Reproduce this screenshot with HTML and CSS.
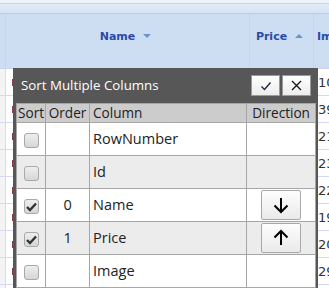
FILE: index.html
```html
<!DOCTYPE html>
<html lang="en">
<head>
    <meta charset="UTF-8">
    <title>Sort Multiple Columns</title>
    <link rel="stylesheet" href="styles.css">
</head>
<body>

    <div class="grid">
        <div class="grid-top"></div>
        <div class="grid-bar"></div>
        <div class="grid-head">
            <div class="gh gh-num"></div>
            <div class="gh gh-name">Name <span class="tri tri-down"></span></div>
            <div class="gh gh-price">Price <span class="tri tri-up"></span></div>
            <div class="gh gh-img">Image</div>
        </div>
        <div class="grid-body">
            <div class="grow"><div class="gc gc-num"></div><div class="gc gc-name"><span class="mark"></span></div><div class="gc gc-price"></div><div class="gc gc-img">10</div></div>
            <div class="grow"><div class="gc gc-num"></div><div class="gc gc-name"><span class="mark"></span></div><div class="gc gc-price"></div><div class="gc gc-img">39</div></div>
            <div class="grow"><div class="gc gc-num"></div><div class="gc gc-name"><span class="mark"></span></div><div class="gc gc-price"></div><div class="gc gc-img">21</div></div>
            <div class="grow"><div class="gc gc-num"></div><div class="gc gc-name"><span class="mark"></span></div><div class="gc gc-price"></div><div class="gc gc-img">23</div></div>
            <div class="grow"><div class="gc gc-num"></div><div class="gc gc-name"><span class="mark"></span></div><div class="gc gc-price"></div><div class="gc gc-img">22</div></div>
            <div class="grow"><div class="gc gc-num"></div><div class="gc gc-name"><span class="mark"></span></div><div class="gc gc-price"></div><div class="gc gc-img">19</div></div>
            <div class="grow"><div class="gc gc-num"></div><div class="gc gc-name"><span class="mark"></span></div><div class="gc gc-price"></div><div class="gc gc-img">20</div></div>
            <div class="grow"><div class="gc gc-num"></div><div class="gc gc-name"><span class="mark"></span></div><div class="gc gc-price"></div><div class="gc gc-img">29</div></div>
            <div class="grow"><div class="gc gc-num"></div><div class="gc gc-name"><span class="mark"></span></div><div class="gc gc-price"></div><div class="gc gc-img">28</div></div>
        </div>
    </div>

    <!-- Ventana de ordenar (encima del grid) -->
    <div class="dialog">
        <div class="dlg-title">
            <span>Sort Multiple Columns</span>
            <div class="dlg-buttons">
                <button class="dlg-btn">
                    <svg width="12" height="10" viewBox="0 0 12 10"><path d="M1.5 5.5 L4.5 8.5 L10.5 1.5" fill="none" stroke="#1b2a44" stroke-width="1.4"/></svg>
                </button>
                <button class="dlg-btn">
                    <svg width="11" height="11" viewBox="0 0 11 11"><path d="M1 1 L10 10 M10 1 L1 10" fill="none" stroke="#111" stroke-width="1.3"/></svg>
                </button>
            </div>
        </div>

        <table class="sort-table">
            <colgroup>
                <col class="c-sort"><col class="c-order"><col class="c-column"><col class="c-dir">
            </colgroup>
            <thead>
                <tr><th>Sort</th><th>Order</th><th class="left">Column</th><th>Direction</th></tr>
            </thead>
            <tbody>
                <tr>
                    <td class="center"><span class="check"></span></td>
                    <td></td>
                    <td>RowNumber</td>
                    <td></td>
                </tr>
                <tr class="alt">
                    <td class="center"><span class="check"></span></td>
                    <td></td>
                    <td>Id</td>
                    <td></td>
                </tr>
                <tr>
                    <td class="center"><span class="check"><svg width="11" height="10" viewBox="0 0 11 10"><path d="M1 5 L4 8 L10 1.5" fill="none" stroke="#333" stroke-width="2.4"/></svg></span></td>
                    <td class="center">0</td>
                    <td>Name</td>
                    <td class="center">
                        <button class="dir-btn">
                            <svg width="16" height="18" viewBox="0 0 16 18"><path d="M8 2 V16 M1.5 9.5 L8 16 L14.5 9.5" fill="none" stroke="#000" stroke-width="2"/></svg>
                        </button>
                    </td>
                </tr>
                <tr class="alt">
                    <td class="center"><span class="check"><svg width="11" height="10" viewBox="0 0 11 10"><path d="M1 5 L4 8 L10 1.5" fill="none" stroke="#333" stroke-width="2.4"/></svg></span></td>
                    <td class="center">1</td>
                    <td>Price</td>
                    <td class="center">
                        <button class="dir-btn">
                            <svg width="16" height="18" viewBox="0 0 16 18"><path d="M8 16 V2 M1.5 8.5 L8 2 L14.5 8.5" fill="none" stroke="#000" stroke-width="2"/></svg>
                        </button>
                    </td>
                </tr>
                <tr>
                    <td class="center"><span class="check"></span></td>
                    <td></td>
                    <td>Image</td>
                    <td></td>
                </tr>
            </tbody>
        </table>
    </div>

</body>
</html>
```

FILE: styles.css
```css
* {
    margin: 0;
    padding: 0;
    box-sizing: border-box;
}

body {
    width: 329px;
    height: 288px;
    overflow: hidden;
    position: relative;
    background: #fff;
    font-family: "Open Sans", "DejaVu Sans", sans-serif;
}

/* Grid de fondo */
.grid {
    width: 329px;
}

.grid-top {
    height: 4px;
    background: #eef2fb;
    border-bottom: 1px solid #cdd0f4;
}

.grid-bar {
    height: 10px;
    background: linear-gradient(#e3ecf9, #d5e3f5);
    border-bottom: 1px solid #b8cdeb;
}

.grid-head {
    display: flex;
    height: 55px;
    background: #cddef3;
    border-bottom: 1px solid #c6d2ee;
}

.gh {
    display: flex;
    align-items: center;
    justify-content: center;
    padding-bottom: 10px;
    border-right: 1px solid #ccd0f4;
    font-family: "DejaVu Sans", sans-serif;
    font-weight: bold;
    font-size: 11px;
    color: #2a4aa6;
    white-space: nowrap;
    overflow: hidden;
}

.gh-num { width: 6px; }
.gh-name { width: 244px; padding-right: 4px; }
.gh-price { width: 64px; padding-right: 4px; }
.gh-img { flex: 1; justify-content: flex-start; padding-left: 3px; border-right: none; }

.tri {
    display: inline-block;
    width: 0;
    height: 0;
    margin-left: 8px;
    border-left: 4px solid transparent;
    border-right: 4px solid transparent;
}

.tri-down { border-top: 4px solid #6f93cb; }
.tri-up { border-bottom: 4px solid #6f93cb; }

.grow {
    display: flex;
    height: 27px;
    border-bottom: 1px solid #d6d8f6;
}

.gc {
    border-right: 1px solid #d6d8f6;
    font-family: "DejaVu Sans", sans-serif;
    font-size: 13px;
    color: #333;
    display: flex;
    align-items: center;
    white-space: nowrap;
    overflow: hidden;
}

.gc-num { width: 6px; background: #f4f4f4; }
.gc-name { width: 244px; padding-left: 6px; }
.gc-price { width: 64px; }
.gc-img { flex: 1; padding-left: 4px; border-right: none; }

.mark {
    width: 2px;
    height: 7px;
    background: #8a3a44;
}

/* Ventana */
.dialog {
    position: absolute;
    left: 13px;
    top: 68px;
    width: 305px;
    height: 230px;
    background: #575757;
    padding: 0 2px 0 3px;
}

.dlg-title {
    height: 35px;
    display: flex;
    align-items: center;
    justify-content: space-between;
    padding: 0 5px 2px 5px;
    color: #fff;
    font-size: 13.3px;
}

.dlg-buttons {
    display: flex;
    gap: 2px;
    margin-top: 2px;
}

.dlg-btn {
    width: 29px;
    height: 21px;
    border: 1px solid #9a9a9a;
    background: linear-gradient(#ffffff, #ececec);
    display: flex;
    align-items: center;
    justify-content: center;
}

.sort-table {
    width: 300px;
    border-collapse: collapse;
    background: #fff;
    font-size: 14.5px;
    line-height: 18px;
    color: #222;
}

.c-sort { width: 29px; }
.c-order { width: 44px; }
.c-column { width: 158px; }
.c-dir { width: 69px; }

.sort-table th {
    height: 19px;
    background: #cccccc;
    border: 1px solid #a6a6a6;
    font-weight: normal;
    font-size: 13.6px;
    line-height: 16px;
    color: #1e1e1e;
    padding: 0 1px;
    white-space: nowrap;
}

.sort-table th.left { text-align: left; padding-left: 3px; }

.sort-table td {
    height: 33px;
    border: 1px solid #a6a6a6;
    padding: 0 3px;
}

.sort-table tr.alt td { background: #ececec; }

.center { text-align: center; }

.check {
    display: inline-flex;
    align-items: center;
    justify-content: center;
    width: 15px;
    height: 15px;
    margin-top: 2px;
    border: 1px solid #a9a9a9;
    border-radius: 3px;
    background: linear-gradient(#eeeeee, #d6d6d6);
    vertical-align: middle;
}

.dir-btn {
    width: 40px;
    height: 30px;
    border: 1px solid #a8a8a8;
    border-radius: 2px;
    background: linear-gradient(#fdfdfd, #eaeaea);
    display: inline-flex;
    align-items: center;
    justify-content: center;
    vertical-align: middle;
}
```
